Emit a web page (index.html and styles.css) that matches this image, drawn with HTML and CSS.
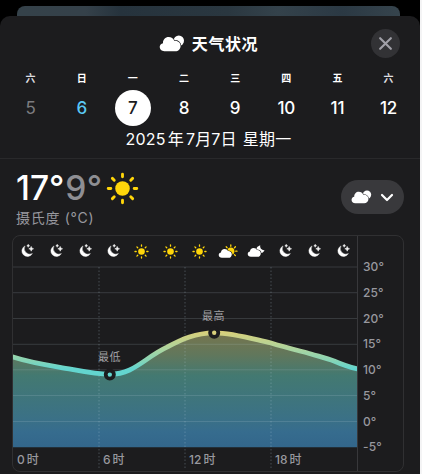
FILE: index.html
```html
<!DOCTYPE html>
<html lang="zh-CN">
<head>
<meta charset="utf-8">
<title>天气状况</title>
<link rel="stylesheet" href="styles.css">
</head>
<body>
<svg class="symbols" aria-hidden="true">
  <symbol id="clouds" viewBox="0 0 26 17">
    <circle cx="19.8" cy="5.7" r="5.2" fill="currentColor"/>
    <path class="gap" d="M5.3 16.2C2.5 16.2.7 14.4.7 12.1C.7 10 2.1 8.5 4 8.2C3.8 4.7 6.4 2.1 9.7 2.1C12.3 2.1 14.3 3.5 15.2 5.7C18.8 5.3 21.6 7.8 21.6 10.9C21.6 13.9 19.3 16.2 16.3 16.2Z"/>
  </symbol>
  <symbol id="sun" viewBox="0 0 30 30">
    <circle cx="15" cy="15" r="6.6" fill="#ffd60a"/>
    <path d="M15 2V4.4M15 25.6V28M2 15H4.4M25.6 15H28M5.8 5.8L7.5 7.5M22.5 22.5L24.2 24.2M5.8 24.2L7.5 22.5M22.5 7.5L24.2 5.8" stroke="#ffd60a" stroke-width="2.6" stroke-linecap="round"/>
  </symbol>
  <symbol id="moon" viewBox="0 0 14 14">
    <path d="M5 1.9A5.6 5.6 0 1 0 12.4 9.6A5.6 5.6 0 0 1 5 1.9Z" fill="currentColor" stroke="currentColor" stroke-width=".4"/>
    <path d="M11.2 2.4Q11.4 4.5 13.6 4.8Q11.4 5.1 11.2 7.2Q11 5.1 8.8 4.8Q11 4.5 11.2 2.4ZM8.2.3Q8.4 1.6 9.6 1.8Q8.4 2 8.2 3.3Q8 2 6.8 1.8Q8 1.6 8.2.3Z" fill="currentColor" stroke="currentColor" stroke-width=".5"/>
  </symbol>
  <symbol id="cloud-sun" viewBox="0 0 20 15">
    <circle cx="12.8" cy="7.2" r="3.6" fill="#ffd60a"/>
    <path d="M12.8 1V2.3M8.2 2.8L9.1 3.7M17.4 2.8L16.5 3.7M17.7 7.2H19M17.4 11.6L16.5 10.7" stroke="#ffd60a" stroke-width="1.3" stroke-linecap="round"/>
    <path class="gap" d="M4 13.8C2 13.8.7 12.7.7 11.1C.7 9.7 1.7 8.7 3 8.5C3 6.3 4.5 4.9 6.6 4.9C8.2 4.9 9.5 5.8 10 7.1C12.2 7 13.8 8.5 13.8 10.4C13.8 12.4 12.4 13.8 10.3 13.8Z"/>
  </symbol>
  <symbol id="cloud-moon" viewBox="0 0 20 15">
    <path d="M13.2 1.3Q12.4 5.4 17.6 6.6Q15.8 9.6 12.9 9.2L8.8 5.2Q10 2.1 13.2 1.3Z" fill="currentColor"/>
    <path class="gap" d="M4 12.8C2 12.8.7 11.7.7 10.1C.7 8.7 1.7 7.7 3 7.5C3 5.3 4.5 3.9 6.6 3.9C8.2 3.9 9.5 4.8 10 6.1C12.2 6 13.8 7.5 13.8 9.4C13.8 11.4 12.4 12.8 10.3 12.8Z"/>
  </symbol>
</svg>

<div class="screen">
  <div class="behind"></div>
  <main class="sheet">
    <header class="header">
      <h1 class="title"><svg class="title-icon"><use href="#clouds"/></svg><span>天气状况</span></h1>
      <button class="close" aria-label="关闭"><svg viewBox="0 0 14 14"><path d="M2 2L12 12M12 2L2 12"/></svg></button>
    </header>
    <div class="week">
      <div class="day past"><span>六</span><b>5</b></div>
      <div class="day today"><span>日</span><b>6</b></div>
      <div class="day selected"><span>一</span><b>7</b></div>
      <div class="day"><span>二</span><b>8</b></div>
      <div class="day"><span>三</span><b>9</b></div>
      <div class="day"><span>四</span><b>10</b></div>
      <div class="day"><span>五</span><b>11</b></div>
      <div class="day past-name"><span>六</span><b>12</b></div>
    </div>
    <p class="date"><span>2025</span><span>年</span><span>7月7日</span><span>星期一</span></p>

    <section class="summary">
      <div>
        <div class="temps"><span class="high">17°</span><span class="low">9°</span><svg class="big-sun"><use href="#sun"/></svg></div>
        <div class="unit">摄氏度 (°C)</div>
      </div>
      <button class="picker" aria-label="选择"><svg class="picker-cloud"><use href="#clouds"/></svg><svg class="chevron" viewBox="0 0 14 9"><path d="M2 2L7 7L12 2"/></svg></button>
    </section>

    <section class="chart">
      <div class="plot">
        <div class="hours">
          <svg class="moon"><use href="#moon"/></svg><svg class="moon"><use href="#moon"/></svg><svg class="moon"><use href="#moon"/></svg><svg class="moon"><use href="#moon"/></svg>
          <svg class="sun"><use href="#sun"/></svg><svg class="sun"><use href="#sun"/></svg><svg class="sun"><use href="#sun"/></svg>
          <svg class="mixed"><use href="#cloud-sun"/></svg><svg class="mixed"><use href="#cloud-moon"/></svg>
          <svg class="moon"><use href="#moon"/></svg><svg class="moon"><use href="#moon"/></svg><svg class="moon"><use href="#moon"/></svg>
        </div>
        <svg class="curve" viewBox="13 266 344 204">
          <defs>
            <linearGradient id="line" gradientUnits="userSpaceOnUse" x1="0" y1="332" x2="0" y2="372">
              <stop offset="0" stop-color="#d8d07b"/><stop offset=".45" stop-color="#a9d5a1"/><stop offset=".72" stop-color="#86d4b6"/><stop offset=".92" stop-color="#63d5cf"/>
            </linearGradient>
            <linearGradient id="area" gradientUnits="userSpaceOnUse" x1="0" y1="332" x2="0" y2="447">
              <stop offset="0" stop-color="#77754d"/><stop offset=".2" stop-color="#61775c"/><stop offset=".38" stop-color="#437971"/><stop offset=".75" stop-color="#3b7186"/><stop offset=".87" stop-color="#366c8e"/><stop offset="1" stop-color="#33668b"/>
            </linearGradient>
          </defs>
          <path d="M13 357C28 362 43 364.5 60 367.3S94 374.3 109.7 374.3C134 374.3 144 358 167 347.2C182 339 196 333 214 332.8C234 333 251 338.5 271 343C284 347 298 350.5 311 354C319 356.4 327 358.3 334 361C342 364.5 348 367 357 368.7V447.3H13Z" fill="url(#area)"/>
          <path class="grid" d="M13 267H357M13 292.7H357M13 318.5H357M13 344.3H357M13 369.8H357M13 395.5H357M13 421.5H357"/>
          <path class="ticks" d="M99 267V470M185 267V470M271 267V470"/>
          <path d="M12 356.7C28 362 43 364.5 60 367.3S94 374.3 109.7 374.3C134 374.3 144 358 167 347.2C182 339 196 333 214 332.8C234 333 251 338.5 271 343C284 347 298 350.5 311 354C319 356.4 327 358.3 334 361C342 364.5 348 367 358 368.9" fill="none" stroke="url(#line)" stroke-width="4.8"/>
          <g class="marks"><circle cx="109.8" cy="374.6" r="4.1" fill="#63d5cf"/><circle cx="214.2" cy="332.8" r="4.1" fill="#d8d07b"/></g>
        </svg>
        <div class="times"><span>0<i>时</i></span><span>6<i>时</i></span><span>12<i>时</i></span><span>18<i>时</i></span></div>
        <span class="note note-low">最低</span>
        <span class="note note-high">最高</span>
      </div>
      <div class="scale"><span>30°</span><span>25°</span><span>20°</span><span>15°</span><span>10°</span><span>5°</span><span>0°</span><span>-5°</span></div>
    </section>
  </main>
</div>
</body>
</html>
```
FILE: styles.css
```css
* { box-sizing: border-box; }
body {
  margin: 0;
  background: #f4f4f5;
  color: #fff;
  font-family: Inter, "Noto Sans CJK SC", sans-serif;
  overflow: hidden;
}
svg { display: block; fill: none; }
button { border: 0; padding: 0; color: inherit; }
.symbols { position: absolute; width: 0; height: 0; }
.gap { fill: currentColor; stroke: var(--gap, #1c1c1e); stroke-width: 1.3; paint-order: stroke; }

.screen { width: 420px; height: 474px; padding-top: 6px; background: #000; overflow: hidden; }
.behind {
  height: 10px;
  margin: 0 20px 0 17px;
  border-radius: 8px 8px 0 0;
  background: linear-gradient(90deg, #35424a, #35414a 18%, #26333d 27%, #2a3740 55%, #34424b 68%, #2b3944 85%, #36444d);
}
.sheet { height: 458px; background: #1c1c1e; border-radius: 10px 10px 0 0; }

.header { display: grid; grid-template-columns: 1fr auto 1fr; align-items: center; height: 55px; padding: 0 20px 0 17px; }
.title { grid-column: 2; display: flex; align-items: center; gap: 7px; margin: 0; font-size: 16px; line-height: 24px; font-weight: 700; letter-spacing: .6px; }
.title-icon { width: 26px; height: 17px; }
.close { justify-self: end; display: grid; place-items: center; width: 29px; height: 29px; border-radius: 50%; background: #323235; }
.close svg { width: 15px; height: 15px; stroke: #a1a0a8; stroke-width: 2; stroke-linecap: round; }

.week { display: grid; grid-template-columns: repeat(8, 51.15px); padding-left: 5px; }
.day { display: flex; flex-direction: column; align-items: center; }
.day span { height: 14px; line-height: 14px; font-size: 10px; font-weight: 700; }
.day b { width: 36px; height: 36px; margin-top: 5px; line-height: 37px; border-radius: 50%; text-align: center; font-size: 17px; font-weight: 500; letter-spacing: -.2px; }
.past b { color: #7c7c80; font-weight: 400; }
.past span, .past-name span { color: #dedee0; }
.today b { color: #5ac8f5; }
.selected b { background: #fff; color: #1c1c1e; }
.date { display: flex; justify-content: center; margin: 0; padding: 1px 3px 0 0; height: 33px; line-height: 25px; font-size: 16px; letter-spacing: .2px; border-bottom: 1px solid #29292b; }
.date span + span { margin-left: 2px; }
.date span:last-child { margin-left: 6px; }

.summary { display: flex; justify-content: space-between; align-items: flex-start; height: 76px; padding: 11px 16px 0; }
.temps { display: flex; align-items: center; height: 36px; font-size: 33.5px; line-height: 36px; font-weight: 500; }
.low { margin-left: 1px; color: #8e8e93; font-weight: 450; letter-spacing: .2px; }
.big-sun { width: 33px; height: 33px; margin-left: 4px; }
.unit { margin-top: 2px; color: #98989e; font-size: 14px; line-height: 20px; letter-spacing: .7px; }
.picker { --gap: #39393c; display: flex; align-items: center; gap: 8px; width: 63px; height: 34px; margin-top: 10px; padding-left: 10px; border-radius: 17px; background: #39393c; }
.picker-cloud { width: 21px; height: 14px; }
.chevron { width: 14px; height: 9px; stroke: #fff; stroke-width: 2.2; stroke-linecap: round; stroke-linejoin: round; }

.chart { display: flex; width: 392px; height: 237px; margin-left: 12px; border: 1px solid #303032; border-radius: 8px; }
.plot { position: relative; width: 345px; border-right: 1px solid #38383b; }
.hours { display: grid; grid-template-columns: repeat(12, 1fr); place-items: center; width: 344px; height: 30px; }
.moon { width: 14px; height: 14px; }
.sun { width: 15px; height: 15px; }
.mixed { width: 20px; height: 15px; }
.curve { width: 344px; height: 204px; }
.grid { stroke: rgba(190, 210, 220, .17); stroke-width: 1; }
.ticks { stroke: rgba(190, 210, 220, .27); stroke-width: 1; stroke-dasharray: 1.5 2; }
.marks { stroke: #1c1c1e; stroke-width: 3.8; }
.times { position: absolute; left: 0; bottom: 3px; display: grid; grid-template-columns: repeat(4, 86px); color: #98989e; font-size: 12px; line-height: 16px; font-weight: 500; }
.times span { padding-left: 4px; }
.times i { margin-left: 2px; font-style: normal; }
.note { position: absolute; color: #a0a0a3; font-size: 11px; line-height: 16px; letter-spacing: .4px; }
.note-low { left: 85px; top: 113px; }
.note-high { left: 189px; top: 72px; }
.scale { padding: 18px 0 0 5px; color: #98989e; font-size: 12px; font-weight: 500; letter-spacing: .1px; }
.scale span { display: block; height: 25.75px; line-height: 26px; }
```
